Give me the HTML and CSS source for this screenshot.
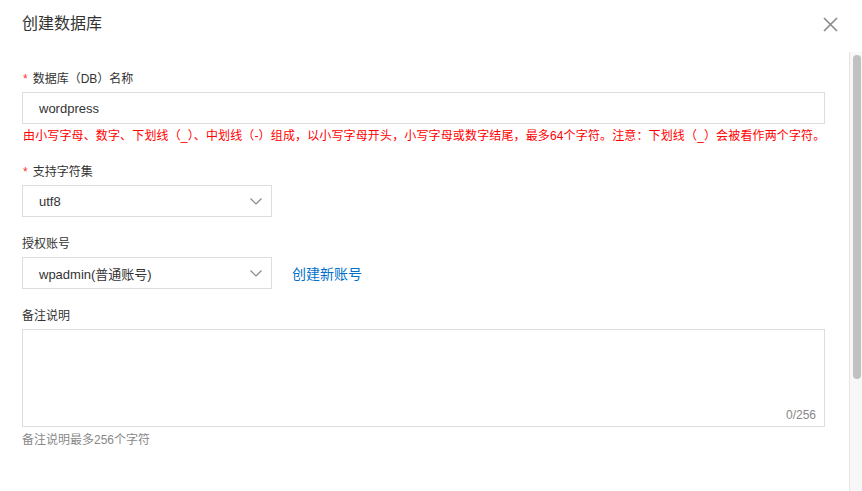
FILE: index.html
```html
<!DOCTYPE html>
<html>
  <head>
    <meta charset="utf-8">
    <title>创建数据库</title>
    <link rel="stylesheet" href="styles.css">
  </head>
  <body>
    <div class="dialog">
      <div class="head">
        <div class="title">创建数据库</div>
        <svg class="close" width="15" height="15" viewBox="0 0 15 15">
          <path d="M1 1 L14 14 M14 1 L1 14" stroke="#888" stroke-width="1.6" fill="none"/>
        </svg>
      </div>
      <div class="main">
        <div class="form">
          <div class="field">
            <div class="lab"><span class="req">*</span>数据库（DB）名称</div>
            <input class="inp" type="text" value="wordpress">
            <div class="err">由小写字母、数字、下划线（_）、中划线（-）组成，以小写字母开头，小写字母或数字结尾，最多64个字符。注意：下划线（_）会被看作两个字符。</div>
          </div>
          <div class="field">
            <div class="lab"><span class="req">*</span>支持字符集</div>
            <div class="sel">
              <span>utf8</span>
              <svg width="12" height="7" viewBox="0 0 12 7"><path d="M0.5 0.5 L6 6 L11.5 0.5" stroke="#888" stroke-width="1.2" fill="none"/></svg>
            </div>
          </div>
          <div class="field">
            <div class="lab">授权账号</div>
            <div class="row">
              <div class="sel">
                <span>wpadmin(普通账号)</span>
                <svg width="12" height="7" viewBox="0 0 12 7"><path d="M0.5 0.5 L6 6 L11.5 0.5" stroke="#888" stroke-width="1.2" fill="none"/></svg>
              </div>
              <a class="link" href="#">创建新账号</a>
            </div>
          </div>
          <div class="field">
            <div class="lab">备注说明</div>
            <div class="area">
              <textarea></textarea>
              <div class="count">0/256</div>
            </div>
            <div class="help">备注说明最多256个字符</div>
          </div>
        </div>
        <div class="scroll"><div class="thumb"></div></div>
      </div>
    </div>
  </body>
</html>
```

FILE: styles.css
```css
body {
  margin: 0;
  font-family: "Liberation Sans", "Noto Sans CJK SC", sans-serif;
  color: #333;
  background: #fff;
}
.dialog {
  width: 862px;
  height: 491px;
  display: flex;
  flex-direction: column;
  overflow: hidden;
}
.head {
  height: 52px;
  padding: 0 24px 0 22px;
  display: flex;
  justify-content: space-between;
  align-items: flex-start;
  box-sizing: border-box;
}
.title {
  font-size: 16px;
  line-height: 20px;
  margin-top: 14px;
  color: #333;
}
.close {
  margin-top: 17px;
}
.main {
  flex: 1;
  display: flex;
}
.form {
  flex: 1;
  min-width: 0;
  padding: 16px 24px 0 22px;
}
.field {
  margin-bottom: 16px;
}
.lab {
  font-size: 12px;
  line-height: 18px;
  padding-top: 2px;
  margin-bottom: 4px;
  color: #333;
}
.req {
  color: #f33;
  margin-right: 5px;
  margin-left: 1px;
}
.inp {
  display: block;
  width: 100%;
  height: 32px;
  box-sizing: border-box;
  border: 1px solid #ddd;
  padding: 0 16px;
  font-family: inherit;
  font-size: 13px;
  color: #333;
  outline: none;
}
.err {
  font-size: 12px;
  line-height: 17px;
  padding-top: 4px;
  color: #f00;
  white-space: nowrap;
  letter-spacing: 0.14px;
  margin-left: 1px;
}
.sel {
  width: 250px;
  height: 32px;
  box-sizing: border-box;
  border: 1px solid #ddd;
  padding: 0 9px 0 16px;
  display: flex;
  align-items: center;
  justify-content: space-between;
  font-size: 13px;
}
.row {
  display: flex;
  align-items: center;
  gap: 20px;
}
.link {
  font-size: 14px;
  color: #0070cc;
  text-decoration: none;
}
.area {
  position: relative;
}
.area textarea {
  display: block;
  width: 100%;
  height: 98px;
  box-sizing: border-box;
  border: 1px solid #ddd;
  resize: none;
  outline: none;
}
.count {
  position: absolute;
  right: 9px;
  bottom: 4px;
  font-size: 12px;
  line-height: 16px;
  color: #888;
}
.help {
  font-size: 12px;
  line-height: 18px;
  margin-top: 4px;
  color: #888;
}
.scroll {
  flex: 0 0 13px;
  box-sizing: border-box;
  border-left: 1px solid #e6e6e6;
  background: #f7f7f7;
  padding: 3px 1px 0 3px;
}
.thumb {
  width: 8px;
  height: 324px;
  border-radius: 4px;
  background: #c1c1c1;
}
```
